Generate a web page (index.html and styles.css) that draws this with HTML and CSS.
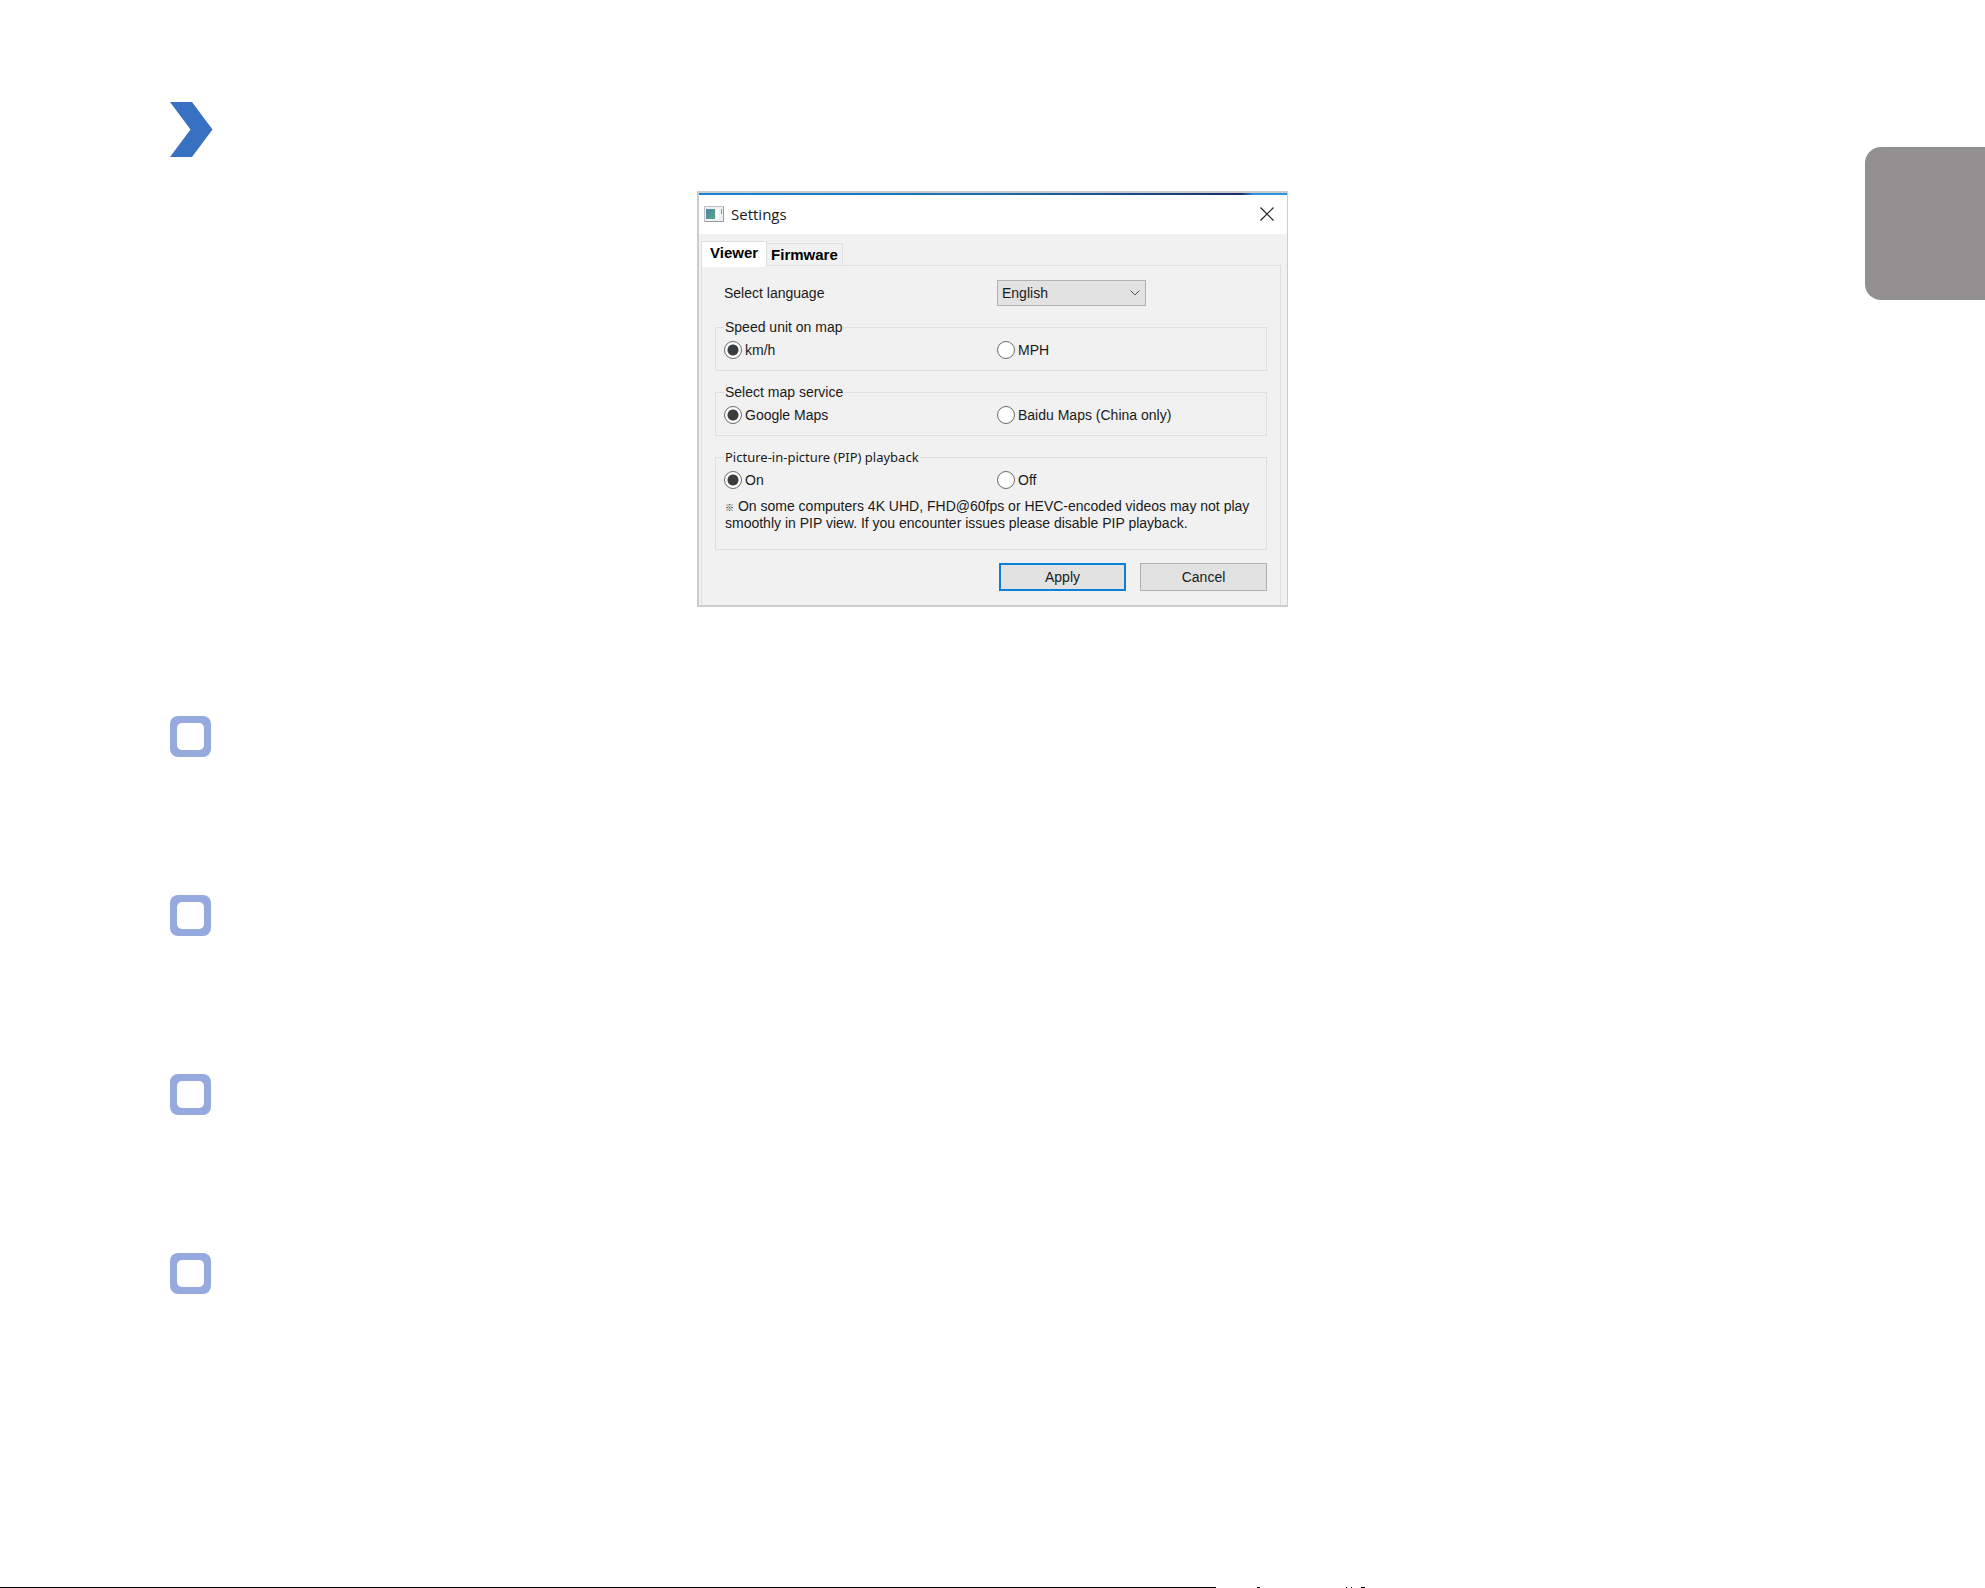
FILE: index.html
```html
<!DOCTYPE html>
<html lang="en">
<head>
<meta charset="utf-8">
<meta name="viewport" content="width=device-width, initial-scale=1">
<title>Settings</title>
<link rel="stylesheet" href="styles.css">
</head>
<body>
<main class="page">
  <section class="top">
    <svg class="chevron" width="43" height="55" viewBox="0 0 43 55" aria-hidden="true"><path d="M0 0H22L42.500 27.500L22 55H0L20.500 27.500Z" fill="#3870c2"/></svg>
    <form class="dialog">
      <header class="titlebar">
        <svg class="app-icon" width="20" height="16" viewBox="0 0 20 16" aria-hidden="true">
          <defs><linearGradient id="screen" x1="0" y1="0" x2="1" y2="1"><stop offset="0" stop-color="#4f83a4"/><stop offset="1" stop-color="#55a883"/></linearGradient></defs>
          <rect x="0.500" y="0.500" width="19" height="15" fill="#eef0f3" stroke="#bcc0c4"/>
          <path d="M1 15.500H19.500V1" fill="none" stroke="#96999d"/>
          <rect x="2" y="3" width="9" height="10" fill="url(#screen)"/>
          <rect x="12" y="3" width="3" height="10" fill="#fff"/>
          <rect x="17" y="3" width="1" height="5" fill="#6fa59c"/>
        </svg>
        <h1 class="title">Settings</h1>
        <button type="button" class="close" aria-label="Close"><svg width="14" height="14" viewBox="0 0 14 14"><path d="M0.500 0.500L13.500 13.500M13.500 0.500L0.500 13.500" stroke="#222" stroke-width="1.200"/></svg></button>
      </header>
      <div class="tabs" role="tablist">
        <button type="button" role="tab" aria-selected="true" class="tab tab-active">Viewer</button>
        <button type="button" role="tab" aria-selected="false" class="tab">Firmware</button>
      </div>
      <div class="panel" role="tabpanel">
        <div class="row language">
          <label for="language">Select language</label>
          <span class="combo">
            <select id="language"><option>English</option></select>
            <svg class="arrow" width="10" height="6" viewBox="0 0 10 6" aria-hidden="true"><path d="M0.500 0.500L5 5L9.500 0.500" fill="none" stroke="#555"/></svg>
          </span>
        </div>
        <fieldset class="group">
          <legend>Speed unit on map</legend>
          <div class="row">
            <label class="option"><input type="radio" name="speed" checked>km/h</label>
            <label class="option"><input type="radio" name="speed">MPH</label>
          </div>
        </fieldset>
        <fieldset class="group">
          <legend>Select map service</legend>
          <div class="row">
            <label class="option"><input type="radio" name="map" checked>Google Maps</label>
            <label class="option"><input type="radio" name="map">Baidu Maps (China only)</label>
          </div>
        </fieldset>
        <fieldset class="group">
          <legend class="legend-ui">Picture-in-picture (PIP) playback</legend>
          <div class="row">
            <label class="option"><input type="radio" name="pip" checked>On</label>
            <label class="option"><input type="radio" name="pip">Off</label>
          </div>
          <p class="note"><span class="mark">※</span> On some computers 4K UHD, FHD@60fps or HEVC-encoded videos may not play<br>smoothly in PIP view. If you encounter issues please disable PIP playback.</p>
        </fieldset>
        <div class="actions">
          <button type="submit" class="btn btn-default">Apply</button>
          <button type="button" class="btn">Cancel</button>
        </div>
      </div>
    </form>
    <aside class="side-tab"></aside>
  </section>
  <ul class="bullets">
    <li class="bullet"></li>
    <li class="bullet"></li>
    <li class="bullet"></li>
    <li class="bullet"></li>
  </ul>
  <footer class="bottom">
    <span class="rule"></span>
    <svg class="specks" width="149" height="1" viewBox="0 0 149 1" aria-hidden="true"><path d="M41 0h3v1h-3zM130 0h1v1h-1zM135 0h1v1h-1zM145 0h4v1h-4z" fill="#000"/></svg>
  </footer>
</main>
</body>
</html>
```
FILE: styles.css
```css
* {
  box-sizing: border-box;
}

body {
  margin: 0;
  background: #fff;
  color: #1a1a1a;
  font-family: "Liberation Sans", Arial, sans-serif;
  font-size: 14px;
  line-height: 16px;
}

.page {
  display: flex;
  flex-direction: column;
  min-height: 100vh;
  padding-top: 102px;
}

.top {
  display: grid;
  grid-template-columns: 1fr minmax(auto, 591px) 1fr;
  align-items: start;
}

.chevron {
  margin-left: 170px;
}

.dialog {
  margin-top: 89px;
  border: 2px solid #cccccc;
  border-right-width: 1px;
  background: #f1f1f1;
}

.titlebar {
  display: flex;
  align-items: center;
  gap: 7px;
  height: 41px;
  padding: 0 13px 2px 5px;
  border-top: 2px solid #0f7fd0;
  border-image: linear-gradient(to right, #1683d8, #1a6fae 50%, #1a2c6c 92%, #2a94dc 94%) 2;
  background: #fff;
}

.title {
  flex: 1;
  margin: 0;
  font: 400 15px/20px "Open Sans", "Noto Sans", sans-serif;
}

.close {
  display: flex;
  padding: 0;
  border: 0;
  background: none;
}

.tabs {
  display: flex;
  align-items: flex-start;
  height: 31px;
  padding: 7px 0 0 2px;
}

.tab {
  height: 22px;
  margin-top: 2px;
  padding: 0 4px;
  border: 1px solid #dfdfdf;
  border-width: 1px 1px 0 0;
  background: #f1f1f1;
  color: #000;
  font: 700 15px/20px "Liberation Sans", Arial, sans-serif;
}

.tab-active {
  z-index: 1;
  height: 26px;
  margin-top: 0;
  padding: 0 8px 3px;
  border-left-width: 1px;
  background: #fff;
}

.panel {
  margin: 0 6px 0 2px;
  padding: 14px 13px;
  border: 1px solid #e0e0e0;
  border-bottom: 0;
}

.row {
  display: grid;
  grid-template-columns: 273px 1fr;
  align-items: center;
}

.language {
  padding-left: 9px;
}

.combo {
  display: grid;
  align-items: center;
  width: 149px;
}

.combo select,
.combo .arrow {
  grid-area: 1 / 1;
}

.combo select {
  height: 26px;
  padding: 0 4px;
  appearance: none;
  border: 1px solid #b2b2b2;
  border-radius: 0;
  background: #e2e2e2;
  color: inherit;
  font: inherit;
}

.arrow {
  justify-self: end;
  margin-right: 6px;
  pointer-events: none;
}

.group {
  min-width: 0;
  margin: 13px 0 0;
  padding: 6px 8px 11px;
  border: 1px solid #dfdfdf;
}

.group legend {
  height: 16px;
  padding: 0 1px;
}

.group .legend-ui {
  font-family: "Noto Sans", sans-serif;
  font-size: 13px;
}

.option {
  display: flex;
  align-items: center;
  gap: 3px;
}

.option input {
  width: 18px;
  height: 18px;
  margin: 0;
  appearance: none;
  border: 1px solid #6a6a6a;
  border-radius: 50%;
  background: #fff;
}

.option input:checked {
  background: radial-gradient(circle, #3a3d40 5px, #fff 6px);
}

.note {
  margin: 9px 0 6px;
  padding-left: 1px;
  line-height: 17px;
  white-space: nowrap;
}

.mark {
  font-family: "Noto Sans CJK JP", sans-serif;
  font-size: 9px;
  line-height: 9px;
}

.actions {
  display: flex;
  justify-content: flex-end;
  gap: 14px;
  margin-top: 13px;
}

.btn {
  width: 127px;
  height: 28px;
  padding: 0;
  border: 1px solid #b0b0b0;
  background: #e2e2e2;
  color: inherit;
  font: inherit;
}

.btn-default {
  border: 2px solid #0c80d8;
}

.side-tab {
  justify-self: end;
  width: 120px;
  height: 153px;
  margin-top: 45px;
  border-radius: 16px 0 0 16px;
  background: #918f90;
}

.bullets {
  display: grid;
  gap: 138px;
  margin: 109px 0 0;
  padding: 0 0 0 170px;
  list-style: none;
}

.bullet {
  width: 41px;
  height: 41px;
  padding: 7px;
  border-radius: 8px;
  background: #96aae0;
}

.bullet::before {
  content: "";
  display: block;
  height: 27px;
  border-radius: 5px;
  background: #fff;
}

.bottom {
  display: flex;
  height: 1px;
  margin-top: auto;
}

.rule {
  width: 61.26%;
  background: #000;
}
```
